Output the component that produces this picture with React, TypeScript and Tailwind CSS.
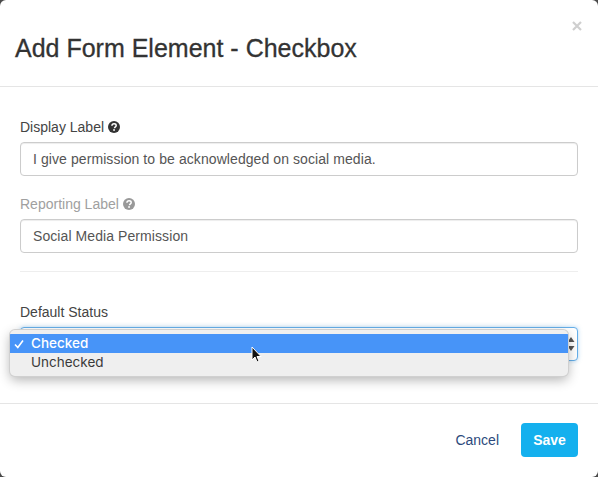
import React from "react";

function Help({ color }: { color: string }) {
  return (
    <svg width="12" height="12" viewBox="0 0 12 12" className="ml-[4px] mt-[-1px]">
      <circle cx="6" cy="6" r="6" fill={color} />
      <path d="M3.9 4.7C4 3.5 4.9 2.8 6.1 2.8c1.2 0 2.1.7 2.1 1.7 0 .8-.5 1.2-1.1 1.6-.4.3-.5.5-.5.9v.2" fill="none" stroke="#fff" strokeWidth="1.5" />
      <rect x="5.2" y="8.2" width="1.7" height="1.6" fill="#fff" />
    </svg>
  );
}

function Field({ label, value, muted }: { label: string; value: string; muted?: boolean }) {
  return (
    <div className="flex flex-col">
      <div className={`flex items-center h-[20px] text-[14px] mb-[5px] ${muted ? "text-[#a0a0a0]" : "text-[#444444]"}`}>
        {label}
        <Help color={muted ? "#999999" : "#333333"} />
      </div>
      <div className="h-[34px] rounded-[4px] border border-[#cccccc] px-[12px] flex items-center text-[14px] tracking-[0.08px] text-[#555555] bg-white shadow-[inset_0_1px_1px_rgba(0,0,0,0.075)]">
        {value}
      </div>
    </div>
  );
}

export default function App() {
  return (
    <div className="w-[598px] h-[477px] bg-[#4a4a4a] overflow-hidden font-['Liberation_Sans',Arial,sans-serif]">
      <div className="relative w-full h-full bg-white rounded-[6px] flex flex-col">
        <div className="h-[87px] shrink-0 border-b border-[#e5e5e5] px-[15px] pt-[33px] relative">
          <div className="text-[25px] leading-[30px] text-[#333333] [-webkit-text-stroke:0.3px_#333333]">Add Form Element - Checkbox</div>
          <svg width="10" height="10" viewBox="0 0 10 10" className="absolute left-[572px] top-[21px]">
            <path d="M1 1L9 9M9 1L1 9" stroke="#cfcfcf" strokeWidth="2.2" />
          </svg>
        </div>
        <div className="flex-1 px-[20px] pt-[30px] flex flex-col">
          <Field label="Display Label" value="I give permission to be acknowledged on social media." />
          <div className="h-[18px]" />
          <Field label="Reporting Label" value="Social Media Permission" muted />
          <div className="mt-[18px] border-t border-[#eeeeee]" />
          <div className="mt-[30px] flex items-center h-[20px] text-[14px] text-[#444444] mb-[5px]">Default Status</div>
          <div className="h-[34px] rounded-[4px] border border-[#66afe9] bg-white relative shadow-[0_0_4px_rgba(102,175,233,0.5)]">
            <svg width="10" height="18" viewBox="0 0 10 18" className="absolute right-[1px] top-[7px]">
              <path d="M1.5 7L5 2l3.5 5zM1.5 11L5 16l3.5-5z" fill="#555555" />
            </svg>
          </div>
        </div>
        <div className="h-[74px] shrink-0 border-t border-[#e5e5e5] flex items-center justify-end px-[20px] pb-[1px]">
          <span className="text-[14px] text-[#2c4a7c] mr-[22px]">Cancel</span>
          <div className="w-[57px] h-[34px] rounded-[4px] bg-[#14b0ee] text-white text-[14px] font-bold flex items-center justify-center">Save</div>
        </div>

        <div className="absolute left-[10px] top-[330px] w-[558px] h-[46px] rounded-[5px] bg-[#efefef] ring-1 ring-[#d0d0d0] pt-[4px] text-[#3a3a3a] shadow-[0_4px_12px_rgba(0,0,0,0.3)] overflow-hidden">
          <div className="h-[19px] bg-[#4794f8] text-white flex items-center font-['Inter',sans-serif] text-[13.5px] font-medium pl-[4px]">
            <svg width="10" height="10" viewBox="0 0 10 10" className="mr-[7px]">
              <path d="M1 5.5L3.8 8.5L9 1.5" fill="none" stroke="#fff" strokeWidth="1.6" />
            </svg>
            Checked
          </div>
          <div className="h-[19px] flex items-center pl-[21px] font-['Inter',sans-serif] text-[13.5px]">Unchecked</div>
        </div>

        <svg width="12" height="18" viewBox="0 0 12 18" className="absolute left-[251px] top-[346px]">
          <path d="M1 1V14L4 11L6 16L8 15L6 10.5H10Z" fill="#111111" stroke="#ffffff" strokeWidth="1" />
        </svg>
      </div>
    </div>
  );
}
